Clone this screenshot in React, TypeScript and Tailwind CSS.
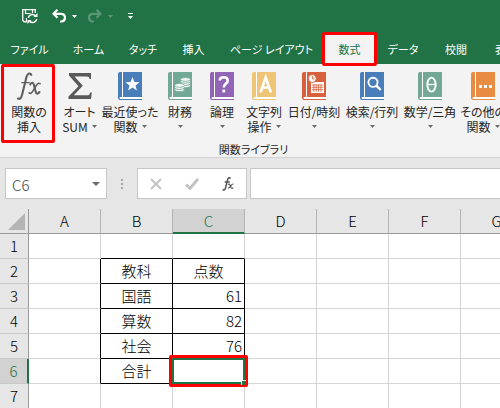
import React, { useState } from 'react';

const tabs = [
  { name: 'ファイル', width: 'w-[59px]' },
  { name: 'ホーム', width: 'w-[59px]' },
  { name: 'タッチ', width: 'w-[50px]' },
  { name: '挿入', width: 'w-[51px]' },
  { name: 'ページ レイアウト', width: 'w-[105px]' },
  { name: '数式', width: 'w-[51px]' },
  { name: 'データ', width: 'w-[56px]' },
  { name: '校閲', width: 'w-[50px]' },
  { name: '表示', width: 'w-[50px]' },
];
const columns = ['A', 'B', 'C', 'D', 'E', 'F', 'G'];

const cells: Record<string, string | number> = {
  B2: '教科',
  C2: '点数',
  B3: '国語',
  C3: 61,
  B4: '算数',
  C4: 82,
  B5: '社会',
  C5: 76,
  B6: '合計',
};

const Caret: React.FC<{ className?: string }> = ({ className = '' }) => (
  <svg viewBox="0 0 5 3" className={`w-[5px] h-[3px] inline-block ${className}`} fill="currentColor">
    <path d="M0 0h5L2.5 3z" />
  </svg>
);

const Book: React.FC<{ color: string; children: React.ReactNode }> = ({ color, children }) => (
  <svg viewBox="0 0 24 28" className="w-6 h-7">
    <path d="M2 0h22v28H2a2 2 0 0 1-2-2V2a2 2 0 0 1 2-2z" fill={color} />
    <path d="M4 0h1v25H4zM2.500 25H24v2H2.500a1 1 0 0 1 0-2z" fill="#fff" />
    {children}
  </svg>
);

const FunctionIcon = () => (
  <svg viewBox="0 0 24 28" className="w-6 h-7" fill="none" stroke="#5f5f5f" strokeLinecap="round">
    <path d="M14.300 2.800C13.500.9 10.800.8 9.600 4.500L5 23c-.9 3.400-2.200 4.400-4 3.500" strokeWidth="2.100" />
    <path d="M4.800 10.600h7.400" strokeWidth="1.400" />
    <path d="M13.200 12.500c1.600-2.300 3-2.300 3.700.3l1.800 7c.6 2.400 1.900 2.700 3.800.2" strokeWidth="2.100" />
    <path d="M23 11.700c-1.500-1.200-2.700.3-3.900 2.100l-3.400 5.600c-1.300 2-2.300 2.500-3.600 1.400" strokeWidth="1.600" />
  </svg>
);

const SumIcon = () => (
  <svg viewBox="0 0 24 28" className="w-6 h-7" fill="#595959">
    <path d="M1 1h22v6h-1.400c-.3-2-1-2.600-3-2.600H6.500l8.300 9.300-9 9.600H19c2 0 2.700-.7 3.200-2.800h1.600L23 27H.5v-2.500l10-10.300L1 3.500z" />
  </svg>
);

const books = {
  recent: (
    <Book color="#4a7ebb">
      <path d="m14.500 5 1.900 5 5.100.2-4 3.300 1.400 5-4.400-2.900-4.400 2.900 1.400-5-4-3.300 5.100-.2z" fill="#fff" />
    </Book>
  ),
  money: (
    <Book color="#73a896">
      <g fill="#f5f8f7" stroke="#73a896" strokeWidth=".8">
        <ellipse cx="17.500" cy="13.800" rx="4.900" ry="1.900" />
        <ellipse cx="17.500" cy="11.600" rx="4.900" ry="1.900" />
        <ellipse cx="17.500" cy="9.400" rx="4.900" ry="1.900" />
        <ellipse cx="17.500" cy="7.500" rx="4.900" ry="1.900" />
        <ellipse cx="11.500" cy="17.800" rx="4.900" ry="1.900" />
        <ellipse cx="11.500" cy="15.600" rx="4.900" ry="1.900" />
        <ellipse cx="11.500" cy="13.400" rx="4.900" ry="1.900" />
      </g>
    </Book>
  ),
  logic: (
    <Book color="#9264b8">
      <path d="M9.700 8.500c.2-4.300 8-4.300 8 0 0 3.300-3.900 3.300-3.900 6.900" fill="none" stroke="#fff" strokeWidth="2.600" />
      <path d="M12.400 17.600h2.800v2.800h-2.800z" fill="#fff" />
    </Book>
  ),
  text: (
    <Book color="#eec476">
      <path d="M8.500 20.500 13.700 5.500l5.200 15M10.300 15.500h7" fill="none" stroke="#fff" strokeWidth="2.600" />
    </Book>
  ),
  date: (
    <Book color="#d8603c">
      <path d="M9 10h13v11H9z" fill="#fff" />
      <path
        d="M10 13h11M10 15.300h11M10 17.600h11M11.800 12.500v7.500M14.200 12.500v7.500M16.600 12.500v7.500M19 12.500v7.500"
        stroke="#d8603c"
        strokeWidth=".8"
      />
      <circle cx="10.300" cy="6.500" r="4" fill="#fff" stroke="#d8603c" strokeWidth="1" />
      <path d="M10.300 4v2.800h2.200" fill="none" stroke="#d8603c" />
    </Book>
  ),
  lookup: (
    <Book color="#4a7ebb">
      <circle cx="13" cy="10.300" r="4.600" fill="none" stroke="#fff" strokeWidth="1.900" />
      <path d="m16.300 13.600 4.400 4.400" stroke="#fff" strokeWidth="2.400" />
    </Book>
  ),
  math: (
    <Book color="#73a896">
      <ellipse cx="13.500" cy="12.600" rx="4.200" ry="7" fill="none" stroke="#fff" strokeWidth="1.900" />
      <path d="M9.500 12.500h8" stroke="#fff" strokeWidth="1.400" />
    </Book>
  ),
  more: (
    <Book color="#e78c42">
      <path d="M8 13h3v3H8zM13 13h3v3h-3zM18 13h3v3h-3z" fill="#fff" />
    </Book>
  ),
};

const commands = [
  { lines: ['関数の', '挿入'], icon: <FunctionIcon />, width: 'w-[58px]', menu: false },
  { lines: ['オート', 'SUM'], icon: <SumIcon />, width: 'w-[43px]', menu: true },
  { lines: ['最近使った', '関数'], icon: books.recent, width: 'w-[58px]', menu: true },
  { lines: ['財務', ''], icon: books.money, width: 'w-[42px]', menu: true },
  { lines: ['論理', ''], icon: books.logic, width: 'w-[42px]', menu: true },
  { lines: ['文字列', '操作'], icon: books.text, width: 'w-[42px]', menu: true },
  { lines: ['日付/時刻', ''], icon: books.date, width: 'w-[58px]', menu: true },
  { lines: ['検索/行列', ''], icon: books.lookup, width: 'w-[58px]', menu: true },
  { lines: ['数学/三角', ''], icon: books.math, width: 'w-[58px]', menu: true },
  { lines: ['その他の', '関数'], icon: books.more, width: 'w-[48px]', menu: true },
];

const TitleBar = () => (
  <div className="flex items-center h-8 pl-[22px] text-white">
    <button aria-label="上書き保存" className="mr-3.5">
      <svg viewBox="0 0 16 16" className="w-4 h-4" fill="none" stroke="currentColor">
        <path d="M13.300 5V1.700H.7v10.600l1.500 1.500H5" strokeWidth="1.300" />
        <path d="M3.500 1.500v4h7v-4M4.500 10v4" strokeWidth="1.200" />
        <circle cx="10.500" cy="10.500" r="5.500" fill="#217346" stroke="none" />
        <path d="M6.300 9.800a4.200 4.200 0 0 1 7.200-2M14.700 11.200a4.200 4.200 0 0 1-7.200 2" strokeWidth="1.500" />
        <path d="M15.500 5v4h-4zM5.500 16v-4h4z" fill="currentColor" stroke="none" />
      </svg>
    </button>
    <button aria-label="元に戻す">
      <svg viewBox="0 0 14 14" className="w-3.5 h-3.5" fill="none" stroke="currentColor" strokeWidth="2.200">
        <path d="M5.500.8 1.500 4.800l4 4M1.500 4.800H9c5.200 0 5.200 7 .5 7.700H8" />
      </svg>
    </button>
    <Caret className="ml-1.5" />
    <button aria-label="やり直し" className="ml-[11px] opacity-25">
      <svg viewBox="0 0 14 14" className="w-3.5 h-3.5" fill="none" stroke="currentColor" strokeWidth="2.200">
        <path d="m8.500.8 4 4-4 4M12.500 4.800H5c-5.200 0-5.200 7-.5 7.700H6" />
      </svg>
    </button>
    <Caret className="ml-1.5 opacity-25" />
    <button aria-label="クイック アクセス ツール バーのカスタマイズ" className="ml-[15px]">
      <svg viewBox="0 0 5 6" className="w-[5px] h-1.5" fill="currentColor">
        <path d="M0 0h5v1H0zM0 3h5L2.500 6z" />
      </svg>
    </button>
  </div>
);

const Ribbon = () => (
  <div className="bg-[#f3f3f3] border-b border-[#d2d2d2] overflow-hidden">
    <div className="flex flex-col items-center w-max text-[#262626] leading-[15px]">
      <div className="flex items-start">
        {commands.map((command, index) => (
          <button key={command.lines[0]} className={`relative flex flex-col items-center h-[77px] pt-2 ${command.width}`}>
            {command.icon}
            <span className="mt-1 whitespace-nowrap">{command.lines[0]}</span>
            <span className="flex items-center justify-center gap-1 h-[15px] whitespace-nowrap">
              {command.lines[1]}
              {command.menu && <Caret className="text-[#6a6a6a]" />}
            </span>
            {index === 0 && (
              <span className="absolute left-px top-0 w-[54px] h-[79px] border-3 border-[#fe0000] rounded-xs" />
            )}
          </button>
        ))}
      </div>
      <span className="h-4 leading-4 text-[11px]">関数ライブラリ</span>
    </div>
  </div>
);

const FormulaBar = () => {
  const [formula, setFormula] = useState('');

  return (
    <div className="flex items-center pt-2.5 pb-2.5 pl-[5px] overflow-hidden">
      <div className="flex items-center w-[102px] h-[31px] shrink-0 bg-white border border-[#c6c6c6]">
        <input
          aria-label="名前ボックス"
          defaultValue="C6"
          className="w-20 h-full pl-1.5 pt-0.5 text-[15px] text-[#444] font-light outline-none"
        />
        <button aria-label="名前の一覧" className="flex">
          <svg viewBox="0 0 8 4" className="w-2 h-1 ml-1.5" fill="#6a6a6a">
            <path d="M0 0h8L4 4z" />
          </svg>
        </button>
      </div>
      <svg viewBox="0 0 2 10" className="w-0.5 h-2.5 mx-3.5 shrink-0" fill="#a6a6a6">
        <path d="M0 0h2v2H0zM0 4h2v2H0zM0 8h2v2H0z" />
      </svg>
      <div className="flex items-center w-[110px] h-[31px] shrink-0 pl-3 gap-[23px] bg-white border border-[#c6c6c6]">
        <button aria-label="キャンセル">
          <svg viewBox="0 0 12 12" className="w-3 h-3" fill="none" stroke="#c2c2c2" strokeWidth="2">
            <path d="m1 1 10 10M11 1 1 11" />
          </svg>
        </button>
        <button aria-label="入力">
          <svg viewBox="0 0 14 12" className="w-3.5 h-3" fill="none" stroke="#c2c2c2" strokeWidth="2.800">
            <path d="m1 6.500 4 4L13 1" />
          </svg>
        </button>
        <button aria-label="関数の挿入">
          <svg viewBox="0 0 12 14" className="w-3 h-3.5" fill="none" stroke="#555" strokeWidth="1.500">
            <path d="M8.500 1.500C7-.2 6 1 5.500 3L3.500 11c-.5 2-1.500 2.300-2.800 1.500M2.700 5h5" />
            <path d="M6 7.500c1-.8 1.600-.6 2 .5l1 2.500c.5 1 1.200 1 2.200.2M11.500 7c-1-.2-1.700.6-2.500 1.700S7.300 11.500 6 11" strokeWidth="1.200" />
          </svg>
        </button>
      </div>
      <input
        aria-label="数式バー"
        value={formula}
        onChange={(e) => setFormula(e.target.value)}
        className="flex-1 min-w-0 h-[31px] ml-[3px] px-2 bg-white border border-r-0 border-[#c6c6c6] outline-none"
      />
    </div>
  );
};

// Rules of the score table (B2:C6) are black, everything else is a grid line
const cellBorder = (col: string, row: number) => {
  const right = 'ABC'.includes(col) && row >= 2 && row <= 6;
  const bottom = 'BC'.includes(col) && row <= 6;
  return `${right ? 'border-r-black' : 'border-r-[#d4d4d4]'} ${bottom ? 'border-b-black' : 'border-b-[#d4d4d4]'}`;
};

const Sheet = () => (
  <div className="overflow-hidden">
    <table className="table-fixed border-separate border-spacing-0 w-[533px] text-[15px] leading-6 font-light text-black">
      <thead>
        <tr className="h-[25px]">
          <th className="w-[29px] p-0 border-r border-b border-[#999]">
            <svg viewBox="0 0 17 17" className="w-[17px] h-[17px] ml-2" fill="#b4b4b4">
              <path d="M17 0v17H0z" />
            </svg>
          </th>
          {columns.map((col) => (
            <th
              key={col}
              scope="col"
              className={`w-[72px] h-[25px] p-0 border-r border-r-[#b4b4b4] font-light leading-[22px] ${
                col === 'C' ? 'bg-[#d2d2d2] text-[#217346] border-b-2 border-b-[#217346]' : 'border-b border-b-[#999]'
              }`}
            >
              {col}
            </th>
          ))}
        </tr>
      </thead>
      <tbody>
        {[1, 2, 3, 4, 5, 6, 7].map((row) => (
          <tr key={row} className="h-[25px]">
            <th
              scope="row"
              className={`h-[25px] p-0 border-b border-b-[#c8c8c8] font-light ${
                row === 6 ? 'bg-[#d2d2d2] text-[#217346] border-r-2 border-r-[#217346]' : 'bg-[#e6e6e6] border-r border-r-[#999]'
              }`}
            >
              {row}
            </th>
            {columns.map((col) => {
              const value = cells[col + row];
              return (
                <td
                  key={col}
                  className={`relative h-[25px] p-0 bg-white border-r border-b ${cellBorder(col, row)} ${
                    typeof value === 'number' ? 'text-right pr-0.5' : 'text-center'
                  }`}
                >
                  {value}
                  {col === 'C' && row === 6 && (
                    <>
                      <span className="absolute -inset-1 border-3 border-[#fe0000] rounded-xs z-10" />
                      <span className="absolute -inset-px border-2 border-[#217346] z-10" />
                      <span className="absolute -right-0.5 -bottom-0.5 w-[5px] h-[5px] bg-[#217346] border-l border-t border-white z-20" />
                    </>
                  )}
                </td>
              );
            })}
          </tr>
        ))}
      </tbody>
    </table>
  </div>
);

const App: React.FC = () => {
  const [activeTab, setActiveTab] = useState('数式');

  return (
    <div className="bg-[#e6e6e6] overflow-hidden text-xs font-['Noto_Sans_CJK_JP',sans-serif]">
      <div className="[font-feature-settings:'palt']">
        <header className="bg-[#217346]">
          <TitleBar />
          <nav className="flex h-8 pt-0.5 text-[11px]">
            {tabs.map((tab) => (
              <button
                key={tab.name}
                onClick={() => setActiveTab(tab.name)}
                className={`relative shrink-0 whitespace-nowrap ${tab.width} ${
                  tab.name === activeTab ? 'bg-[#f3f3f3] text-[#217346]' : 'text-white'
                }`}
              >
                {tab.name}
                {tab.name === '数式' && (
                  <span className="absolute -inset-x-0.5 -inset-y-0.5 border-3 border-[#fe0000] rounded-xs z-10" />
                )}
              </button>
            ))}
          </nav>
        </header>
        <Ribbon />
      </div>
      <FormulaBar />
      <Sheet />
    </div>
  );
};

export default App;
